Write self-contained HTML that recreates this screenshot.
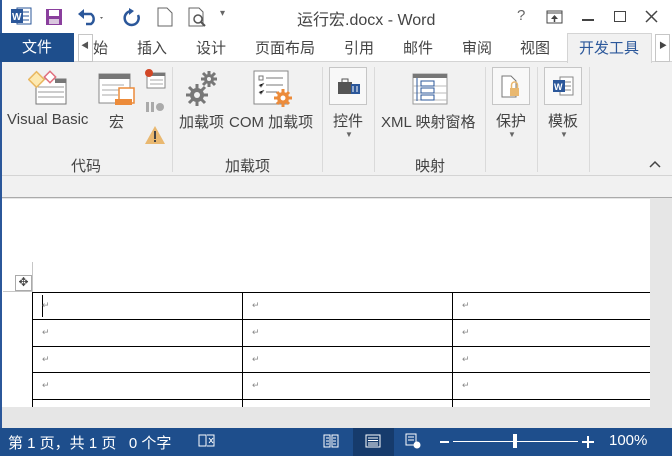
<!DOCTYPE html>
<html><head><meta charset="utf-8"><style>
*{margin:0;padding:0;box-sizing:border-box}
body{width:672px;height:456px;overflow:hidden;background:#f1f1f1;font-family:"Liberation Sans","Noto Sans CJK SC",sans-serif;position:relative;color:#444}
.a{position:absolute}
.t{font-size:15px;color:#444;white-space:nowrap}
</style></head><body>
<div class="a" style="left:0;top:0;width:672px;height:33px;background:#fff"></div>
<div class="a" style="left:0;top:0;width:2px;height:456px;background:#2b579a"></div>
<svg class="a" style="left:10px;top:6px" width="22" height="20"><rect x="7" y="2" width="14" height="16" fill="#fff" stroke="#2b579a"/><line x1="11" y1="6" x2="19" y2="6" stroke="#2b579a"/><line x1="11" y1="10" x2="19" y2="10" stroke="#2b579a"/><line x1="11" y1="14" x2="19" y2="14" stroke="#2b579a"/><rect x="1" y="3" width="12" height="14" fill="#2b579a"/><text x="2" y="14" font-size="10" fill="#fff" font-weight="bold" font-family="Liberation Sans">W</text></svg>
<svg class="a" style="left:45px;top:8px" width="18" height="18"><rect x="1" y="1" width="16" height="16" fill="#8a3f9d"/><rect x="4" y="2" width="10" height="6" fill="#fff"/><rect x="4" y="11" width="10" height="5" fill="#d9c6de"/></svg>
<svg class="a" style="left:77px;top:7px" width="28" height="20"><path d="M4 7 H14 A6 6 0 0 1 14 17 H9" fill="none" stroke="#2b579a" stroke-width="2.5"/><path d="M1 7 L7 2 L7 12 Z" fill="#2b579a"/><path d="M23 10 l3 0 l-1.5 2z" fill="#666"/></svg>
<svg class="a" style="left:122px;top:7px" width="20" height="20"><path d="M10 4 A7 7 0 1 0 16 8" fill="none" stroke="#2b579a" stroke-width="2.5"/><path d="M7 1 L12 4 L7 8Z" fill="#2b579a"/></svg>
<svg class="a" style="left:157px;top:7px" width="16" height="20"><path d="M1 1 H10 L15 6 V19 H1Z" fill="#fff" stroke="#666"/></svg>
<svg class="a" style="left:188px;top:7px" width="20" height="20"><path d="M1 1 H11 L15 5 V19 H1Z" fill="#fff" stroke="#666"/><circle cx="10" cy="12" r="4" fill="#fff" stroke="#555" stroke-width="1.5"/><line x1="13" y1="15" x2="17" y2="19" stroke="#555" stroke-width="2"/></svg>
<div class="a t" style="left:220px;top:8px;font-size:10px;color:#666">▾</div>
<div class="a t" style="left:297px;top:6px;font-size:16px;color:#444">运行宏.docx - Word</div>
<div class="a t" style="left:517px;top:7px;font-size:15px;color:#666">?</div>
<svg class="a" style="left:546px;top:10px" width="18" height="14"><rect x="1" y="1" width="15" height="12" fill="none" stroke="#444"/><line x1="1" y1="3" x2="16" y2="3" stroke="#444"/><path d="M8.5 5 L5 9 H12Z" fill="#444"/><line x1="8.5" y1="8" x2="8.5" y2="12" stroke="#444" stroke-width="1.5"/></svg>
<div class="a" style="left:582px;top:19px;width:12px;height:1.5px;background:#444"></div>
<div class="a" style="left:614px;top:11px;width:12px;height:11px;border:1.5px solid #444"></div>
<svg class="a" style="left:645px;top:10px" width="13" height="13"><path d="M1 1L12 12M12 1L1 12" stroke="#444" stroke-width="1.5"/></svg>
<div class="a" style="left:0;top:33px;width:672px;height:29px;background:#fff;border-bottom:1px solid #d4d4d4"></div>
<div class="a" style="left:0;top:33px;width:74px;height:29px;background:#1e4e8c;color:#fff;font-size:15px;text-align:center;line-height:29px">文件</div>
<div class="a" style="left:78px;top:34px;width:15px;height:28px;border:1px solid #c6c6c6;background:#fff"></div>
<div class="a t" style="left:81px;top:40px;font-size:8px;color:#555">◀</div>
<div class="a t" style="left:93px;top:37px">始</div>
<div class="a t" style="left:137px;top:37px">插入</div>
<div class="a t" style="left:196px;top:37px">设计</div>
<div class="a t" style="left:255px;top:37px">页面布局</div>
<div class="a t" style="left:344px;top:37px">引用</div>
<div class="a t" style="left:403px;top:37px">邮件</div>
<div class="a t" style="left:462px;top:37px">审阅</div>
<div class="a t" style="left:520px;top:37px">视图</div>
<div class="a" style="left:567px;top:33px;width:85px;height:30px;background:#f1f1f1;border:1px solid #d4d4d4;border-bottom:none"></div>
<div class="a t" style="left:579px;top:37px;color:#2b579a">开发工具</div>
<div class="a" style="left:655px;top:34px;width:15px;height:28px;border:1px solid #c6c6c6;background:#fff"></div>
<div class="a t" style="left:659px;top:40px;font-size:8px;color:#444">▶</div>
<div class="a" style="left:2px;top:63px;width:670px;height:113px;background:#f1f1f1;border-bottom:1px solid #d4d4d4"></div>
<svg class="a" style="left:28px;top:69px" width="40" height="36"><rect x="8" y="10" width="30" height="25" fill="#fff" stroke="#777"/><rect x="27" y="10" width="11" height="4" fill="#777"/><g stroke="#999"><line x1="10" y1="18" x2="36" y2="18"/><line x1="10" y1="23" x2="36" y2="23"/><line x1="10" y1="28" x2="36" y2="28"/></g><rect x="3" y="5" width="11" height="11" transform="rotate(-45 8.5 10.5)" fill="#fde9b0" stroke="#e9b860" stroke-width="1.5"/><rect x="18" y="4" width="8" height="8" transform="rotate(-45 22 8)" fill="#fff" stroke="#e0707e" stroke-width="1.5"/></svg>
<div class="a t" style="left:7px;top:111px">Visual Basic</div>
<svg class="a" style="left:98px;top:73px" width="38" height="34"><rect x="1" y="1" width="31" height="29" fill="#fff" stroke="#888"/><rect x="1" y="1" width="31" height="5" fill="#777"/><g stroke="#aaa"><line x1="4" y1="12" x2="26" y2="12"/><line x1="4" y1="17" x2="26" y2="17"/><line x1="4" y1="22" x2="20" y2="22"/></g><rect x="21" y="15" width="15" height="15" fill="#fff" stroke="#ec8b3a" stroke-width="1.5"/><rect x="17" y="26" width="17" height="6" fill="#ec8b3a"/></svg>
<div class="a t" style="left:109px;top:111px">宏</div>
<svg class="a" style="left:144px;top:68px" width="22" height="22"><rect x="3" y="5" width="18" height="15" fill="#fff" stroke="#888"/><rect x="3" y="5" width="18" height="3" fill="#777"/><circle cx="5" cy="5" r="4" fill="#d24726"/><g stroke="#aaa"><line x1="6" y1="12" x2="19" y2="12"/><line x1="6" y1="16" x2="19" y2="16"/></g></svg>
<svg class="a" style="left:145px;top:100px" width="20" height="14"><rect x="1" y="2" width="3" height="10" fill="#aaa"/><rect x="6" y="2" width="3" height="10" fill="#aaa"/><circle cx="15" cy="7" r="4" fill="#aaa"/></svg>
<svg class="a" style="left:144px;top:125px" width="22" height="20"><path d="M11 1 L21 19 H1Z" fill="#e9b870"/><rect x="10" y="6" width="2" height="8" fill="#444"/><rect x="10" y="15" width="2" height="2" fill="#444"/></svg>
<div class="a t" style="left:71px;top:155px">代码</div>
<div class="a" style="left:172px;top:67px;width:1px;height:105px;background:#dadada"></div>
<svg class="a" style="left:186px;top:70px" width="34" height="38"><g fill="#777"><circle cx="23" cy="9" r="5"/><circle cx="11" cy="25" r="7"/></g><g stroke="#777" stroke-width="3"><path d="M23 1V17M15 9H31M17 3L29 15M29 3L17 15"/><path d="M11 14V36M0 25H22M3 17L19 33M19 17L3 33"/></g><circle cx="23" cy="9" r="2" fill="#f1f1f1"/><circle cx="11" cy="25" r="3" fill="#f1f1f1"/></svg>
<div class="a t" style="left:179px;top:111px">加载项</div>
<svg class="a" style="left:253px;top:70px" width="40" height="38"><rect x="1" y="1" width="34" height="33" fill="#fff" stroke="#888"/><rect x="6" y="6" width="4" height="4" fill="none" stroke="#777"/><g stroke="#777"><line x1="13" y1="8" x2="30" y2="8"/><line x1="13" y1="15" x2="30" y2="15"/><line x1="13" y1="22" x2="24" y2="22"/><path d="M6 15 l2 2 l3-4M6 22 l2 2 l3-4"/></g><circle cx="30" cy="28" r="6" fill="#ec8b3a"/><g stroke="#ec8b3a" stroke-width="3"><path d="M30 19V37M21 28H39M24 22L36 34M36 22L24 34"/></g><circle cx="30" cy="28" r="2.5" fill="#fff"/></svg>
<div class="a t" style="left:229px;top:111px">COM 加载项</div>
<div class="a t" style="left:225px;top:155px">加载项</div>
<div class="a" style="left:322px;top:67px;width:1px;height:105px;background:#dadada"></div>
<div class="a" style="left:329px;top:67px;width:38px;height:38px;border:1px solid #c6c6c6;background:#f8f8f8"></div>
<svg class="a" style="left:337px;top:76px" width="24" height="20"><rect x="1" y="6" width="14" height="12" fill="#555"/><rect x="5" y="3" width="6" height="4" fill="none" stroke="#555"/><rect x="14" y="8" width="9" height="10" fill="#2b579a"/><path d="M16 10v6M20 10v6" stroke="#fff"/></svg>
<div class="a t" style="left:333px;top:110px">控件</div>
<div class="a t" style="left:345px;top:130px;font-size:8px;color:#666">▼</div>
<div class="a" style="left:374px;top:67px;width:1px;height:105px;background:#dadada"></div>
<svg class="a" style="left:412px;top:73px" width="36" height="32"><rect x="1" y="1" width="34" height="30" fill="#fff" stroke="#999"/><rect x="1" y="1" width="34" height="4" fill="#777"/><g stroke="#bbb"><line x1="1" y1="13" x2="35" y2="13"/><line x1="1" y1="20" x2="35" y2="20"/><line x1="1" y1="27" x2="35" y2="27"/></g><line x1="5" y1="5" x2="5" y2="28" stroke="#2b579a"/><g fill="#fff" stroke="#2b579a"><rect x="9" y="8" width="13" height="5"/><rect x="9" y="15" width="13" height="5"/><rect x="9" y="22" width="13" height="5"/></g></svg>
<div class="a t" style="left:381px;top:111px">XML 映射窗格</div>
<div class="a t" style="left:415px;top:155px">映射</div>
<div class="a" style="left:485px;top:67px;width:1px;height:105px;background:#dadada"></div>
<div class="a" style="left:492px;top:67px;width:38px;height:38px;border:1px solid #c6c6c6;background:#f8f8f8"></div>
<svg class="a" style="left:500px;top:75px" width="22" height="24"><path d="M2 1H11L16 6V22H2Z" fill="#fff" stroke="#777"/><rect x="10" y="13" width="9" height="8" fill="#e9b870"/><path d="M11.5 13v-3a3 3 0 0 1 6 0v3" fill="none" stroke="#e9b870" stroke-width="1.5"/></svg>
<div class="a t" style="left:496px;top:110px">保护</div>
<div class="a t" style="left:508px;top:130px;font-size:8px;color:#666">▼</div>
<div class="a" style="left:537px;top:67px;width:1px;height:105px;background:#dadada"></div>
<div class="a" style="left:544px;top:67px;width:38px;height:38px;border:1px solid #c6c6c6;background:#f8f8f8"></div>
<svg class="a" style="left:551px;top:75px" width="24" height="22"><rect x="9" y="2" width="13" height="18" fill="#fff" stroke="#888"/><g stroke="#888"><line x1="12" y1="7" x2="20" y2="7"/><line x1="12" y1="11" x2="20" y2="11"/><line x1="12" y1="15" x2="20" y2="15"/></g><rect x="2" y="5" width="12" height="12" fill="#2b579a"/><text x="3" y="15" font-size="9" font-weight="bold" fill="#fff" font-family="Liberation Sans">W</text></svg>
<div class="a t" style="left:548px;top:110px">模板</div>
<div class="a t" style="left:560px;top:130px;font-size:8px;color:#666">▼</div>
<div class="a" style="left:589px;top:67px;width:1px;height:105px;background:#dadada"></div>
<svg class="a" style="left:649px;top:160px" width="12" height="8"><path d="M1 7 L6 2 L11 7" fill="none" stroke="#444" stroke-width="1.5"/></svg>
<div class="a" style="left:2px;top:177px;width:670px;height:251px;background:#e6e6e6"></div>
<div class="a" style="left:2px;top:177px;width:670px;height:21px;background:#f1f1f1;border-bottom:1px solid #ababab"></div>
<div class="a" style="left:2px;top:199px;width:648px;height:208px;background:#fff"></div>
<div class="a" style="left:32px;top:262px;width:1px;height:30px;background:#c6c6c6"></div>
<div class="a" style="left:3px;top:291px;width:29px;height:1px;background:#c6c6c6"></div>
<div class="a" style="left:15px;top:275px;width:17px;height:16px;border:1px solid #aaa;background:#fff;font-size:12px;line-height:13px;text-align:center;color:#444">✥</div>
<div class="a" style="left:32px;top:292px;width:618px;height:115px;border-left:1px solid #000;border-top:1px solid #000"></div>
<div class="a" style="left:32px;top:319px;width:618px;height:1px;background:#000"></div>
<div class="a" style="left:32px;top:346px;width:618px;height:1px;background:#000"></div>
<div class="a" style="left:32px;top:372px;width:618px;height:1px;background:#000"></div>
<div class="a" style="left:32px;top:399px;width:618px;height:1px;background:#000"></div>
<div class="a" style="left:242px;top:292px;width:1px;height:115px;background:#000"></div>
<div class="a" style="left:452px;top:292px;width:1px;height:115px;background:#000"></div>
<div class="a" style="left:42px;top:295px;width:1px;height:22px;background:#000"></div>
<div style="font-size:9px;color:#888">
<div class="a" style="left:42px;top:300px">↵</div><div class="a" style="left:252px;top:300px">↵</div><div class="a" style="left:462px;top:300px">↵</div>
<div class="a" style="left:42px;top:327px">↵</div><div class="a" style="left:252px;top:327px">↵</div><div class="a" style="left:462px;top:327px">↵</div>
<div class="a" style="left:42px;top:354px">↵</div><div class="a" style="left:252px;top:354px">↵</div><div class="a" style="left:462px;top:354px">↵</div>
<div class="a" style="left:42px;top:380px">↵</div><div class="a" style="left:252px;top:380px">↵</div><div class="a" style="left:462px;top:380px">↵</div>
</div>
<div class="a" style="left:0;top:428px;width:672px;height:28px;background:#1e4e8c"></div>
<div class="a t" style="left:8px;top:432px;color:#fff">第 1 页，共 1 页&nbsp;&nbsp; 0 个字</div>
<svg class="a" style="left:198px;top:433px" width="20" height="16"><rect x="1" y="2" width="7" height="11" fill="none" stroke="#fff"/><path d="M9 2h7v11h-7" fill="none" stroke="#fff"/><path d="M11 5l4 5M15 5l-4 5" stroke="#fff"/></svg>
<svg class="a" style="left:323px;top:434px" width="16" height="14"><path d="M1 1h6v12H1zM9 1h6v12H9z" fill="none" stroke="#fff"/><path d="M3 4h3M3 7h3M3 10h3M10 4h3M10 7h3M10 10h3" stroke="#fff"/></svg>
<div class="a" style="left:353px;top:428px;width:41px;height:28px;background:#163b6c"></div>
<svg class="a" style="left:365px;top:434px" width="16" height="14"><rect x="1" y="1" width="14" height="12" fill="none" stroke="#fff"/><path d="M3 4h10M3 6.5h10M3 9h10M3 11h10" stroke="#fff"/></svg>
<svg class="a" style="left:405px;top:433px" width="16" height="16"><rect x="1" y="1" width="10" height="11" fill="none" stroke="#fff"/><path d="M3 4h6M3 7h6" stroke="#fff"/><circle cx="12" cy="12" r="3.5" fill="#fff"/></svg>
<div class="a" style="left:440px;top:441px;width:9px;height:2px;background:#fff"></div>
<div class="a" style="left:453px;top:441px;width:125px;height:1px;background:#fff"></div>
<div class="a" style="left:513px;top:434px;width:4px;height:14px;background:#fff"></div>
<div class="a" style="left:582px;top:441px;width:12px;height:2px;background:#fff"></div>
<div class="a" style="left:587px;top:436px;width:2px;height:12px;background:#fff"></div>
<div class="a t" style="left:609px;top:432px;color:#fff">100%</div>
</body></html>
